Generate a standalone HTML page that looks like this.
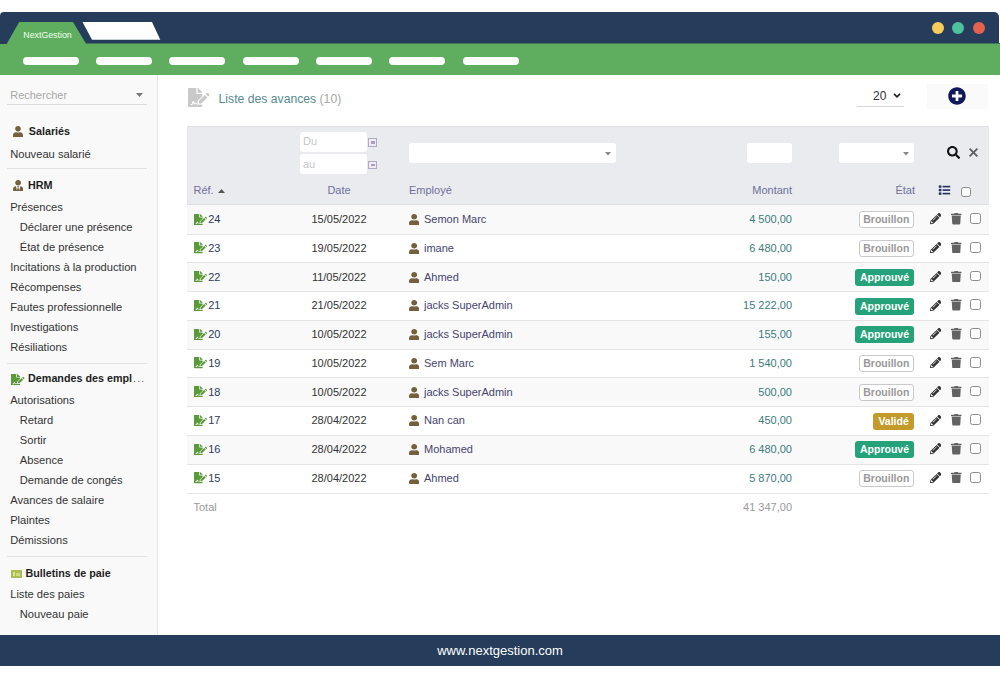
<!DOCTYPE html>
<html><head><meta charset="utf-8">
<style>
*{box-sizing:border-box;margin:0;padding:0}
html,body{width:1000px;height:679px;overflow:hidden;background:#fff;font-family:"Liberation Sans",sans-serif;font-size:11px;color:#333}
.a{position:absolute;display:block}
.t{position:absolute;line-height:14px;white-space:nowrap}
.pill{position:absolute;top:57px;height:8px;width:56px;border-radius:4px;background:#fff}
.dot{position:absolute;top:21.5px;width:12px;height:12px;border-radius:50%}
.sep{position:absolute;left:6.5px;width:140px;height:1px;background:#e2e2e2}
.si{color:#333;font-size:11.15px}
.sh{font-weight:bold;color:#1e1e1e;font-size:10.75px}
.th{color:#70709a}
.row{position:absolute;left:187px;width:802px;border-bottom:1px solid #e6e6e6}
.inp{position:absolute;background:#fff;border-radius:3px}
.badge{position:absolute;height:17px;border-radius:3px;font-weight:bold;font-size:10.5px;line-height:17px;text-align:center}
.br{border:1px solid #c9c9c9;color:#999;background:#fff;line-height:15px}
.ap{background:#26a27a;color:#fff}
.va{background:#c49a2a;color:#fff}
.cb{position:absolute;width:10.5px;height:10.8px;border:1px solid #8c8c8c;border-radius:2.5px;background:#fff}
</style></head><body>

<div class="a" style="left:0;top:12px;width:999px;height:32px;background:#253c5b;border-radius:4px 5px 0 0"></div>
<div class="a" style="left:0;top:44px;width:1000px;height:31px;background:#5fae5f"></div>
<div class="a" style="left:86px;top:43px;width:914px;height:1px;background:#42755d"></div>
<svg class="a" style="left:0;top:0" width="200" height="50"><polygon points="6.5,44.2 19.2,22 73,22 86.4,44.2" fill="#5fae5f"/><polygon points="82.5,22 152,22 160.3,39.8 92,39.8" fill="#fff"/></svg>
<div class="t" style="left:23.3px;top:28.7px;font-size:8.8px;line-height:12px;color:#f2fff0">NextGestion</div>
<div class="pill" style="left:22.8px"></div>
<div class="pill" style="left:96.1px"></div>
<div class="pill" style="left:169.4px"></div>
<div class="pill" style="left:242.7px"></div>
<div class="pill" style="left:316.0px"></div>
<div class="pill" style="left:389.3px"></div>
<div class="pill" style="left:462.6px"></div>
<div class="dot" style="left:932px;background:#f5cd5b"></div>
<div class="dot" style="left:952.3px;background:#4bc39d"></div>
<div class="dot" style="left:973px;background:#e5614f"></div>
<div class="a" style="left:0;top:75px;width:158px;height:560px;background:#f9f9f9;border-right:1px solid #e6e6e6"></div>
<div class="t" style="left:10.2px;top:88px;color:#a8a8a8">Rechercher</div>
<svg class="a" style="left:136px;top:93px" width="7" height="4"><polygon points="0,0 7,0 3.5,4" fill="#777"/></svg>
<div class="sep" style="top:104px;background:#dcdcdc"></div>
<svg class="a" style="left:12.8px;top:125.5px" width="10.00" height="11.30" viewBox="0 0 448 512" preserveAspectRatio="none"><path d="M224 256c70.7 0 128-57.3 128-128S294.7 0 224 0 96 57.3 96 128s57.3 128 128 128zm89.6 32h-16.7c-22.2 10.2-46.9 16-72.9 16s-50.6-5.8-72.9-16h-16.7C60.2 288 0 348.2 0 422.4V464c0 26.5 21.5 48 48 48h352c26.5 0 48-21.5 48-48v-41.6c0-74.2-60.2-134.4-134.4-134.4z" fill="#74603c"/></svg>
<div class="t sh" style="left:28.8px;top:124px;">Salariés</div>
<div class="t si" style="left:10.2px;top:146.8px;">Nouveau salarié</div>
<div class="sep" style="top:168px"></div>
<svg class="a" style="left:12.6px;top:179.6px" width="10.20" height="11.20" viewBox="0 0 448 512" preserveAspectRatio="none"><path d="M224 256c70.7 0 128-57.3 128-128S294.7 0 224 0 96 57.3 96 128s57.3 128 128 128zm95.8 32.6L272 480l-32-136 32-56h-96l32 56-32 136-47.8-191.4C56.9 292 0 350.3 0 422.4V464c0 26.5 21.5 48 48 48h352c26.5 0 48-21.5 48-48v-41.6c0-72.1-56.9-130.4-128.2-133.8z" fill="#74603c"/></svg>
<div class="t sh" style="left:27.9px;top:177.8px;">HRM</div>
<div class="t si" style="left:10.2px;top:200.4px;">Présences</div>
<div class="t si" style="left:19.8px;top:220.4px;">Déclarer une présence</div>
<div class="t si" style="left:19.8px;top:240.4px;">État de présence</div>
<div class="t si" style="left:10.2px;top:260.4px;">Incitations à la production</div>
<div class="t si" style="left:10.2px;top:280.4px;">Récompenses</div>
<div class="t si" style="left:10.2px;top:300.4px;">Fautes professionnelle</div>
<div class="t si" style="left:10.2px;top:320.4px;">Investigations</div>
<div class="t si" style="left:10.2px;top:340.4px;">Résiliations</div>
<div class="sep" style="top:363px"></div>
<svg class="a" style="left:11px;top:373.5px" width="13.50" height="11.50" viewBox="0 0 576 512" preserveAspectRatio="none"><path d="M218.17 424.14c-2.95-5.92-8.09-6.52-10.17-6.52s-7.22.59-10.02 6.19l-7.670 15.34c-6.37 12.78-25.03 11.37-29.48-2.09L144 400l-10.61 31.88c-5.890 17.66-22.38 29.53-41 29.53H80c-8.840 0-16-7.160-16-16s7.160-16 16-16h12.39c4.830 0 9.110-3.080 10.640-7.660l18.19-54.640c3.300-9.810 12.440-16.410 22.780-16.410s19.480 6.590 22.770 16.410l13.880 41.640c19.750-16.190 54.060-9.700 66 14.160 1.890 3.780 5.490 5.950 9.360 6.260v-82.120l128-127.090V160H248c-13.200 0-24-10.800-24-24V0H24C10.700 0 0 10.700 0 24v464c0 13.300 10.700 24 24 24h336c13.300 0 24-10.700 24-24v-40l-128-.110c-16.120-.310-30.580-9.280-37.830-23.750zM384 121.900c0-6.300-2.500-12.400-7-16.900L279.100 7c-4.500-4.500-10.600-7-17-7H256v128h128v-6.100zm-96 225.060V416h68.990l161.680-162.780-67.880-67.880L288 346.960zm280.540-179.630l-31.870-31.870c-9.940-9.940-26.070-9.940-36.010 0l-27.250 27.250 67.880 67.880 27.250-27.250c9.950-9.940 9.950-26.070 0-36.010z" fill="#5b9a3a"/></svg>
<div class="t sh" style="left:28.1px;top:371.4px;">Demandes des empl<span style="font-weight:normal;color:#666;letter-spacing:1.1px;margin-left:1px">...</span></div>
<div class="t si" style="left:10.2px;top:393.2px;">Autorisations</div>
<div class="t si" style="left:19.8px;top:413.2px;">Retard</div>
<div class="t si" style="left:19.8px;top:433.2px;">Sortir</div>
<div class="t si" style="left:19.8px;top:453.2px;">Absence</div>
<div class="t si" style="left:19.8px;top:473.2px;">Demande de congés</div>
<div class="t si" style="left:10.2px;top:493.2px;">Avances de salaire</div>
<div class="t si" style="left:10.2px;top:513.2px;">Plaintes</div>
<div class="t si" style="left:10.2px;top:533.2px;">Démissions</div>
<div class="sep" style="top:556px"></div>
<div class="a" style="left:10.5px;top:570px;width:11.3px;height:7.8px;background:#abbd58"></div>
<div class="a" style="left:13px;top:572px;width:1.5px;height:4px;background:#d9e68a"></div>
<div class="a" style="left:16px;top:573px;width:4px;height:2.5px;background:#cfdc7f"></div>
<div class="t sh" style="left:25.4px;top:565.6px;">Bulletins de paie</div>
<div class="t si" style="left:10.2px;top:587.4px;">Liste des paies</div>
<div class="t si" style="left:19.8px;top:607.4px;">Nouveau paie</div>
<svg class="a" style="left:188px;top:88px" width="21.50" height="19.00" viewBox="0 0 576 512" preserveAspectRatio="none"><path d="M218.17 424.14c-2.95-5.92-8.09-6.52-10.17-6.52s-7.22.59-10.02 6.19l-7.670 15.34c-6.37 12.78-25.03 11.37-29.48-2.09L144 400l-10.61 31.88c-5.890 17.66-22.38 29.53-41 29.53H80c-8.840 0-16-7.160-16-16s7.160-16 16-16h12.39c4.830 0 9.110-3.080 10.640-7.660l18.19-54.640c3.300-9.810 12.440-16.410 22.780-16.410s19.480 6.590 22.770 16.410l13.880 41.640c19.750-16.190 54.060-9.700 66 14.160 1.890 3.780 5.490 5.950 9.360 6.260v-82.120l128-127.090V160H248c-13.200 0-24-10.800-24-24V0H24C10.700 0 0 10.700 0 24v464c0 13.300 10.700 24 24 24h336c13.300 0 24-10.700 24-24v-40l-128-.110c-16.120-.310-30.580-9.280-37.830-23.750zM384 121.900c0-6.300-2.500-12.400-7-16.900L279.100 7c-4.500-4.500-10.600-7-17-7H256v128h128v-6.100zm-96 225.060V416h68.990l161.680-162.780-67.880-67.880L288 346.960zm280.540-179.630l-31.870-31.870c-9.940-9.940-26.070-9.940-36.010 0l-27.250 27.250 67.880 67.880 27.250-27.250c9.950-9.940 9.950-26.070 0-36.010z" fill="#c9c9c9"/></svg>
<div class="t" style="left:218.6px;top:91.6px;font-size:12.2px"><span style="color:#568b90">Liste des avances</span> <span style="color:#a6a6a6">(10)</span></div>
<div class="t" style="left:873px;top:88.5px;font-size:12px;color:#333">20</div>
<svg class="a" style="left:893px;top:92.5px" width="8" height="5"><polyline points="1,0.8 4,3.8 7,0.8" fill="none" stroke="#222" stroke-width="1.7"/></svg>
<div class="a" style="left:857px;top:106px;width:47px;height:1px;background:#d8d8d8"></div>
<div class="a" style="left:927px;top:84.3px;width:60.5px;height:24.3px;background:#fafafa"></div>
<svg class="a" style="left:948.3px;top:86.8px" width="18.00" height="18.00" viewBox="0 0 512 512" preserveAspectRatio="none"><path d="M256 8C119 8 8 119 8 256s111 248 248 248 248-111 248-248S393 8 256 8zm144 276c0 6.6-5.4 12-12 12h-92v92c0 6.6-5.4 12-12 12h-56c-6.6 0-12-5.4-12-12v-92h-92c-6.6 0-12-5.4-12-12v-56c0-6.6 5.4-12 12-12h92v-92c0-6.6 5.4-12 12-12h56c6.6 0 12 5.4 12 12v92h92c6.6 0 12 5.4 12 12v56z" fill="#0f1a5c"/></svg>
<div class="a" style="left:187px;top:126px;width:802px;height:79px;background:#e9ebef;border-top:1.5px solid #dfe1e5;border-left:1px solid #e3e5e9;border-bottom:1px solid #dcdfe3"></div>
<div class="inp" style="left:299.6px;top:131.6px;width:67.4px;height:20.4px"></div>
<div class="inp" style="left:299.6px;top:154px;width:67.4px;height:20.4px"></div>
<div class="t" style="left:303px;top:134px;color:#c8c8c8">Du</div>
<div class="t" style="left:303px;top:157px;color:#c8c8c8">au</div>
<div class="a" style="left:368px;top:138.4px;width:9.4px;height:8.2px;border:1px solid #aeaac4;background:#efeaf4"></div>
<div class="a" style="left:370.5px;top:141.1px;width:4.4px;height:2.8px;background:#ad9cc2"></div>
<div class="a" style="left:368px;top:161px;width:9.4px;height:8.2px;border:1px solid #aeaac4;background:#efeaf4"></div>
<div class="a" style="left:370.5px;top:163.7px;width:4.4px;height:2.8px;background:#ad9cc2"></div>
<div class="inp" style="left:408.6px;top:143px;width:207.4px;height:20px"></div>
<svg class="a" style="left:604.5px;top:152px" width="7" height="4"><polygon points="0,0 6,0 3,3.5" fill="#888"/></svg>
<div class="inp" style="left:746.8px;top:143px;width:44.8px;height:20px"></div>
<div class="inp" style="left:839px;top:143px;width:75.3px;height:20px"></div>
<svg class="a" style="left:902.5px;top:152px" width="7" height="4"><polygon points="0,0 6,0 3,3.5" fill="#888"/></svg>
<svg class="a" style="left:947px;top:146px" width="13.20" height="13.00" viewBox="0 0 512 512" preserveAspectRatio="none"><path d="M505 442.7L405.3 343c-4.5-4.5-10.6-7-17-7H372c27.6-35.3 44-79.7 44-128C416 93.1 322.9 0 208 0S0 93.1 0 208s93.1 208 208 208c48.3 0 92.7-16.4 128-44v16.3c0 6.4 2.5 12.5 7 17l99.7 99.7c9.4 9.4 24.6 9.4 33.9 0l28.3-28.3c9.4-9.4 9.4-24.6.1-34zM208 336c-70.7 0-128-57.2-128-128 0-70.7 57.2-128 128-128 70.7 0 128 57.2 128 128 0 70.7-57.2 128-128 128z" fill="#111"/></svg>
<svg class="a" style="left:967px;top:146px" width="14" height="13"><path d="M2.6 2.6 L10.4 10.4 M10.4 2.6 L2.6 10.4" stroke="#626262" stroke-width="1.9" stroke-linecap="butt"/></svg>
<div class="t th" style="left:193.5px;top:183px;">Réf. <svg style="display:inline-block;vertical-align:1px;margin-left:1px" width="7" height="4"><polygon points="0,4 7,4 3.5,0" fill="#555"/></svg></div>
<div class="t th" style="left:289px;top:183px;width:100px;text-align:center">Date</div>
<div class="t th" style="left:409px;top:183px;">Employé</div>
<div class="t th" style="left:692px;top:183px;width:100px;text-align:right">Montant</div>
<div class="t th" style="left:815px;top:183px;width:100px;text-align:right">État</div>
<svg class="a" style="left:938px;top:184px" width="14" height="12"><g fill="#262d5a"><rect x="0.8" y="1.4" width="2.6" height="2.4"/><rect x="0.8" y="4.9" width="2.6" height="2.4"/><rect x="0.8" y="8.4" width="2.6" height="2.4"/><rect x="4.6" y="1.8" width="7.6" height="1.6"/><rect x="4.6" y="5.3" width="7.6" height="1.6"/><rect x="4.6" y="8.8" width="7.6" height="1.6"/></g></svg>
<div class="cb" style="left:961px;top:186.8px;width:9.8px;height:9.8px"></div>
<div class="a" style="left:187px;top:205px;width:802px;height:29px;background:#f9f9f9"></div>
<div class="a" style="left:187px;top:235px;width:802px;height:27px;background:#fff"></div>
<div class="a" style="left:187px;top:263px;width:802px;height:28px;background:#f9f9f9"></div>
<div class="a" style="left:187px;top:292px;width:802px;height:28px;background:#fff"></div>
<div class="a" style="left:187px;top:321px;width:802px;height:28px;background:#f9f9f9"></div>
<div class="a" style="left:187px;top:350px;width:802px;height:27px;background:#fff"></div>
<div class="a" style="left:187px;top:378px;width:802px;height:28px;background:#f9f9f9"></div>
<div class="a" style="left:187px;top:407px;width:802px;height:28px;background:#fff"></div>
<div class="a" style="left:187px;top:436px;width:802px;height:28px;background:#f9f9f9"></div>
<div class="a" style="left:187px;top:465px;width:802px;height:28px;background:#fff"></div>
<div class="a" style="left:187px;top:234px;width:802px;height:1px;background:#e4e4e4"></div>
<div class="a" style="left:187px;top:262px;width:802px;height:1px;background:#e4e4e4"></div>
<div class="a" style="left:187px;top:291px;width:802px;height:1px;background:#e4e4e4"></div>
<div class="a" style="left:187px;top:320px;width:802px;height:1px;background:#e4e4e4"></div>
<div class="a" style="left:187px;top:349px;width:802px;height:1px;background:#e4e4e4"></div>
<div class="a" style="left:187px;top:377px;width:802px;height:1px;background:#e4e4e4"></div>
<div class="a" style="left:187px;top:406px;width:802px;height:1px;background:#e4e4e4"></div>
<div class="a" style="left:187px;top:435px;width:802px;height:1px;background:#e4e4e4"></div>
<div class="a" style="left:187px;top:464px;width:802px;height:1px;background:#e4e4e4"></div>
<div class="a" style="left:187px;top:493px;width:802px;height:1px;background:#e4e4e4"></div>
<svg class="a" style="left:193.5px;top:213.6px" width="13.00" height="11.20" viewBox="0 0 576 512" preserveAspectRatio="none"><path d="M218.17 424.14c-2.95-5.92-8.09-6.52-10.17-6.52s-7.22.59-10.02 6.19l-7.670 15.34c-6.37 12.78-25.03 11.37-29.48-2.09L144 400l-10.61 31.88c-5.890 17.66-22.38 29.53-41 29.53H80c-8.840 0-16-7.160-16-16s7.160-16 16-16h12.39c4.830 0 9.110-3.080 10.640-7.660l18.19-54.640c3.300-9.810 12.440-16.410 22.780-16.410s19.480 6.590 22.770 16.410l13.880 41.640c19.750-16.190 54.060-9.700 66 14.160 1.890 3.780 5.490 5.950 9.360 6.260v-82.120l128-127.090V160H248c-13.200 0-24-10.800-24-24V0H24C10.700 0 0 10.700 0 24v464c0 13.300 10.700 24 24 24h336c13.300 0 24-10.700 24-24v-40l-128-.110c-16.120-.310-30.580-9.280-37.830-23.750zM384 121.900c0-6.300-2.500-12.400-7-16.900L279.100 7c-4.500-4.500-10.600-7-17-7H256v128h128v-6.100zm-96 225.060V416h68.990l161.680-162.780-67.880-67.880L288 346.960zm280.540-179.630l-31.870-31.870c-9.940-9.940-26.070-9.940-36.010 0l-27.250 27.250 67.880 67.880 27.250-27.250c9.950-9.940 9.950-26.070 0-36.010z" fill="#5b9a3a"/></svg>
<div class="t" style="left:208.2px;top:212.0px;color:#2f3a5c">24</div>
<div class="t" style="left:289px;top:212.0px;width:100px;text-align:center;color:#333">15/05/2022</div>
<svg class="a" style="left:409px;top:214.0px" width="10.40" height="11.00" viewBox="0 0 448 512" preserveAspectRatio="none"><path d="M224 256c70.7 0 128-57.3 128-128S294.7 0 224 0 96 57.3 96 128s57.3 128 128 128zm89.6 32h-16.7c-22.2 10.2-46.9 16-72.9 16s-50.6-5.8-72.9-16h-16.7C60.2 288 0 348.2 0 422.4V464c0 26.5 21.5 48 48 48h352c26.5 0 48-21.5 48-48v-41.6c0-74.2-60.2-134.4-134.4-134.4z" fill="#74603c"/></svg>
<div class="t" style="left:424px;top:212.0px;color:#45456f">Semon Marc</div>
<div class="t" style="left:692px;top:212.0px;width:100px;text-align:right;color:#3c7c7c">4 500,00</div>
<div class="badge br" style="left:858.6px;top:211.40px;width:55.4px">Brouillon</div>
<svg class="a" style="left:929.7px;top:213.4px" width="11.50" height="11.20" viewBox="0 0 512 512" preserveAspectRatio="none"><path d="M497.9 142.1l-46.1 46.1c-4.7 4.7-12.3 4.7-17 0l-111-111c-4.7-4.7-4.7-12.3 0-17l46.1-46.1c18.7-18.7 49.1-18.7 67.9 0l60.1 60.1c18.8 18.7 18.8 49.1 0 67.9zM284.2 99.8L21.6 362.4.4 483.9c-2.9 16.4 11.4 30.6 27.8 27.8l121.5-21.3 262.6-262.6c4.7-4.7 4.7-12.3 0-17l-111-111c-4.8-4.7-12.4-4.7-17.1 0zM124.1 339.9c-5.5-5.5-5.5-14.3 0-19.8l154-154c5.5-5.5 14.3-5.5 19.8 0s5.5 14.3 0 19.8l-154 154c-5.5 5.5-14.3 5.5-19.8 0zM88 424h48v36.3l-64.5 11.3-31.1-31.1L51.7 376H88v48z" fill="#333"/></svg>
<svg class="a" style="left:951px;top:213.2px" width="10.50" height="11.40" viewBox="0 0 448 512" preserveAspectRatio="none"><path d="M432 32H312l-9.4-18.7A24 24 0 0 0 281.1 0H166.8a23.72 23.72 0 0 0-21.4 13.3L136 32H16A16 16 0 0 0 0 48v32a16 16 0 0 0 16 16h416a16 16 0 0 0 16-16V48a16 16 0 0 0-16-16zM53.2 467a48 48 0 0 0 47.9 45h245.8a48 48 0 0 0 47.9-45L416 128H32z" fill="#626262"/></svg>
<div class="cb" style="left:970.3px;top:213.00px"></div>
<svg class="a" style="left:193.5px;top:242.35px" width="13.00" height="11.20" viewBox="0 0 576 512" preserveAspectRatio="none"><path d="M218.17 424.14c-2.95-5.92-8.09-6.52-10.17-6.52s-7.22.59-10.02 6.19l-7.670 15.34c-6.37 12.78-25.03 11.37-29.48-2.09L144 400l-10.61 31.88c-5.890 17.66-22.38 29.53-41 29.53H80c-8.840 0-16-7.160-16-16s7.160-16 16-16h12.39c4.830 0 9.110-3.080 10.640-7.660l18.19-54.640c3.300-9.810 12.440-16.410 22.780-16.410s19.480 6.590 22.770 16.410l13.880 41.640c19.750-16.190 54.060-9.700 66 14.160 1.890 3.780 5.490 5.950 9.360 6.260v-82.120l128-127.090V160H248c-13.200 0-24-10.800-24-24V0H24C10.700 0 0 10.700 0 24v464c0 13.300 10.700 24 24 24h336c13.300 0 24-10.700 24-24v-40l-128-.110c-16.120-.310-30.580-9.280-37.830-23.750zM384 121.900c0-6.300-2.500-12.400-7-16.900L279.100 7c-4.500-4.500-10.600-7-17-7H256v128h128v-6.100zm-96 225.060V416h68.990l161.680-162.780-67.880-67.880L288 346.960zm280.540-179.630l-31.870-31.870c-9.940-9.940-26.070-9.940-36.010 0l-27.250 27.250 67.880 67.880 27.250-27.250c9.950-9.940 9.950-26.070 0-36.010z" fill="#5b9a3a"/></svg>
<div class="t" style="left:208.2px;top:240.75px;color:#2f3a5c">23</div>
<div class="t" style="left:289px;top:240.75px;width:100px;text-align:center;color:#333">19/05/2022</div>
<svg class="a" style="left:409px;top:242.75px" width="10.40" height="11.00" viewBox="0 0 448 512" preserveAspectRatio="none"><path d="M224 256c70.7 0 128-57.3 128-128S294.7 0 224 0 96 57.3 96 128s57.3 128 128 128zm89.6 32h-16.7c-22.2 10.2-46.9 16-72.9 16s-50.6-5.8-72.9-16h-16.7C60.2 288 0 348.2 0 422.4V464c0 26.5 21.5 48 48 48h352c26.5 0 48-21.5 48-48v-41.6c0-74.2-60.2-134.4-134.4-134.4z" fill="#74603c"/></svg>
<div class="t" style="left:424px;top:240.75px;color:#45456f">imane</div>
<div class="t" style="left:692px;top:240.75px;width:100px;text-align:right;color:#3c7c7c">6 480,00</div>
<div class="badge br" style="left:858.6px;top:240.15px;width:55.4px">Brouillon</div>
<svg class="a" style="left:929.7px;top:242.15px" width="11.50" height="11.20" viewBox="0 0 512 512" preserveAspectRatio="none"><path d="M497.9 142.1l-46.1 46.1c-4.7 4.7-12.3 4.7-17 0l-111-111c-4.7-4.7-4.7-12.3 0-17l46.1-46.1c18.7-18.7 49.1-18.7 67.9 0l60.1 60.1c18.8 18.7 18.8 49.1 0 67.9zM284.2 99.8L21.6 362.4.4 483.9c-2.9 16.4 11.4 30.6 27.8 27.8l121.5-21.3 262.6-262.6c4.7-4.7 4.7-12.3 0-17l-111-111c-4.8-4.7-12.4-4.7-17.1 0zM124.1 339.9c-5.5-5.5-5.5-14.3 0-19.8l154-154c5.5-5.5 14.3-5.5 19.8 0s5.5 14.3 0 19.8l-154 154c-5.5 5.5-14.3 5.5-19.8 0zM88 424h48v36.3l-64.5 11.3-31.1-31.1L51.7 376H88v48z" fill="#333"/></svg>
<svg class="a" style="left:951px;top:241.95px" width="10.50" height="11.40" viewBox="0 0 448 512" preserveAspectRatio="none"><path d="M432 32H312l-9.4-18.7A24 24 0 0 0 281.1 0H166.8a23.72 23.72 0 0 0-21.4 13.3L136 32H16A16 16 0 0 0 0 48v32a16 16 0 0 0 16 16h416a16 16 0 0 0 16-16V48a16 16 0 0 0-16-16zM53.2 467a48 48 0 0 0 47.9 45h245.8a48 48 0 0 0 47.9-45L416 128H32z" fill="#626262"/></svg>
<div class="cb" style="left:970.3px;top:241.75px"></div>
<svg class="a" style="left:193.5px;top:271.1px" width="13.00" height="11.20" viewBox="0 0 576 512" preserveAspectRatio="none"><path d="M218.17 424.14c-2.95-5.92-8.09-6.52-10.17-6.52s-7.22.59-10.02 6.19l-7.670 15.34c-6.37 12.78-25.03 11.37-29.48-2.09L144 400l-10.61 31.88c-5.890 17.66-22.38 29.53-41 29.53H80c-8.840 0-16-7.160-16-16s7.160-16 16-16h12.39c4.830 0 9.110-3.080 10.640-7.660l18.19-54.640c3.300-9.810 12.440-16.410 22.780-16.410s19.480 6.590 22.770 16.410l13.880 41.640c19.750-16.190 54.060-9.700 66 14.160 1.890 3.780 5.490 5.950 9.360 6.260v-82.120l128-127.090V160H248c-13.200 0-24-10.800-24-24V0H24C10.700 0 0 10.700 0 24v464c0 13.300 10.700 24 24 24h336c13.300 0 24-10.700 24-24v-40l-128-.110c-16.120-.310-30.580-9.280-37.830-23.750zM384 121.900c0-6.300-2.500-12.400-7-16.900L279.100 7c-4.500-4.500-10.600-7-17-7H256v128h128v-6.100zm-96 225.060V416h68.990l161.680-162.780-67.880-67.880L288 346.960zm280.540-179.630l-31.870-31.870c-9.940-9.940-26.070-9.940-36.010 0l-27.250 27.250 67.880 67.880 27.250-27.250c9.950-9.940 9.950-26.070 0-36.010z" fill="#5b9a3a"/></svg>
<div class="t" style="left:208.2px;top:269.5px;color:#2f3a5c">22</div>
<div class="t" style="left:289px;top:269.5px;width:100px;text-align:center;color:#333">11/05/2022</div>
<svg class="a" style="left:409px;top:271.5px" width="10.40" height="11.00" viewBox="0 0 448 512" preserveAspectRatio="none"><path d="M224 256c70.7 0 128-57.3 128-128S294.7 0 224 0 96 57.3 96 128s57.3 128 128 128zm89.6 32h-16.7c-22.2 10.2-46.9 16-72.9 16s-50.6-5.8-72.9-16h-16.7C60.2 288 0 348.2 0 422.4V464c0 26.5 21.5 48 48 48h352c26.5 0 48-21.5 48-48v-41.6c0-74.2-60.2-134.4-134.4-134.4z" fill="#74603c"/></svg>
<div class="t" style="left:424px;top:269.5px;color:#45456f">Ahmed</div>
<div class="t" style="left:692px;top:269.5px;width:100px;text-align:right;color:#3c7c7c">150,00</div>
<div class="badge ap" style="left:855.0px;top:268.90px;width:59px">Approuvé</div>
<svg class="a" style="left:929.7px;top:270.9px" width="11.50" height="11.20" viewBox="0 0 512 512" preserveAspectRatio="none"><path d="M497.9 142.1l-46.1 46.1c-4.7 4.7-12.3 4.7-17 0l-111-111c-4.7-4.7-4.7-12.3 0-17l46.1-46.1c18.7-18.7 49.1-18.7 67.9 0l60.1 60.1c18.8 18.7 18.8 49.1 0 67.9zM284.2 99.8L21.6 362.4.4 483.9c-2.9 16.4 11.4 30.6 27.8 27.8l121.5-21.3 262.6-262.6c4.7-4.7 4.7-12.3 0-17l-111-111c-4.8-4.7-12.4-4.7-17.1 0zM124.1 339.9c-5.5-5.5-5.5-14.3 0-19.8l154-154c5.5-5.5 14.3-5.5 19.8 0s5.5 14.3 0 19.8l-154 154c-5.5 5.5-14.3 5.5-19.8 0zM88 424h48v36.3l-64.5 11.3-31.1-31.1L51.7 376H88v48z" fill="#333"/></svg>
<svg class="a" style="left:951px;top:270.7px" width="10.50" height="11.40" viewBox="0 0 448 512" preserveAspectRatio="none"><path d="M432 32H312l-9.4-18.7A24 24 0 0 0 281.1 0H166.8a23.72 23.72 0 0 0-21.4 13.3L136 32H16A16 16 0 0 0 0 48v32a16 16 0 0 0 16 16h416a16 16 0 0 0 16-16V48a16 16 0 0 0-16-16zM53.2 467a48 48 0 0 0 47.9 45h245.8a48 48 0 0 0 47.9-45L416 128H32z" fill="#626262"/></svg>
<div class="cb" style="left:970.3px;top:270.50px"></div>
<svg class="a" style="left:193.5px;top:299.85px" width="13.00" height="11.20" viewBox="0 0 576 512" preserveAspectRatio="none"><path d="M218.17 424.14c-2.95-5.92-8.09-6.52-10.17-6.52s-7.22.59-10.02 6.19l-7.670 15.34c-6.37 12.78-25.03 11.37-29.48-2.09L144 400l-10.61 31.88c-5.890 17.66-22.38 29.53-41 29.53H80c-8.840 0-16-7.160-16-16s7.160-16 16-16h12.39c4.830 0 9.110-3.080 10.640-7.660l18.19-54.640c3.300-9.810 12.440-16.410 22.780-16.410s19.480 6.590 22.770 16.410l13.880 41.640c19.750-16.190 54.060-9.700 66 14.160 1.890 3.780 5.490 5.950 9.360 6.260v-82.120l128-127.090V160H248c-13.200 0-24-10.800-24-24V0H24C10.700 0 0 10.700 0 24v464c0 13.300 10.700 24 24 24h336c13.300 0 24-10.700 24-24v-40l-128-.110c-16.120-.310-30.580-9.280-37.830-23.750zM384 121.900c0-6.300-2.500-12.400-7-16.900L279.100 7c-4.500-4.500-10.600-7-17-7H256v128h128v-6.100zm-96 225.060V416h68.990l161.680-162.780-67.880-67.880L288 346.960zm280.540-179.630l-31.870-31.870c-9.940-9.940-26.070-9.940-36.010 0l-27.250 27.250 67.880 67.880 27.250-27.250c9.950-9.940 9.950-26.070 0-36.010z" fill="#5b9a3a"/></svg>
<div class="t" style="left:208.2px;top:298.25px;color:#2f3a5c">21</div>
<div class="t" style="left:289px;top:298.25px;width:100px;text-align:center;color:#333">21/05/2022</div>
<svg class="a" style="left:409px;top:300.25px" width="10.40" height="11.00" viewBox="0 0 448 512" preserveAspectRatio="none"><path d="M224 256c70.7 0 128-57.3 128-128S294.7 0 224 0 96 57.3 96 128s57.3 128 128 128zm89.6 32h-16.7c-22.2 10.2-46.9 16-72.9 16s-50.6-5.8-72.9-16h-16.7C60.2 288 0 348.2 0 422.4V464c0 26.5 21.5 48 48 48h352c26.5 0 48-21.5 48-48v-41.6c0-74.2-60.2-134.4-134.4-134.4z" fill="#74603c"/></svg>
<div class="t" style="left:424px;top:298.25px;color:#45456f">jacks SuperAdmin</div>
<div class="t" style="left:692px;top:298.25px;width:100px;text-align:right;color:#3c7c7c">15 222,00</div>
<div class="badge ap" style="left:855.0px;top:297.65px;width:59px">Approuvé</div>
<svg class="a" style="left:929.7px;top:299.65px" width="11.50" height="11.20" viewBox="0 0 512 512" preserveAspectRatio="none"><path d="M497.9 142.1l-46.1 46.1c-4.7 4.7-12.3 4.7-17 0l-111-111c-4.7-4.7-4.7-12.3 0-17l46.1-46.1c18.7-18.7 49.1-18.7 67.9 0l60.1 60.1c18.8 18.7 18.8 49.1 0 67.9zM284.2 99.8L21.6 362.4.4 483.9c-2.9 16.4 11.4 30.6 27.8 27.8l121.5-21.3 262.6-262.6c4.7-4.7 4.7-12.3 0-17l-111-111c-4.8-4.7-12.4-4.7-17.1 0zM124.1 339.9c-5.5-5.5-5.5-14.3 0-19.8l154-154c5.5-5.5 14.3-5.5 19.8 0s5.5 14.3 0 19.8l-154 154c-5.5 5.5-14.3 5.5-19.8 0zM88 424h48v36.3l-64.5 11.3-31.1-31.1L51.7 376H88v48z" fill="#333"/></svg>
<svg class="a" style="left:951px;top:299.45px" width="10.50" height="11.40" viewBox="0 0 448 512" preserveAspectRatio="none"><path d="M432 32H312l-9.4-18.7A24 24 0 0 0 281.1 0H166.8a23.72 23.72 0 0 0-21.4 13.3L136 32H16A16 16 0 0 0 0 48v32a16 16 0 0 0 16 16h416a16 16 0 0 0 16-16V48a16 16 0 0 0-16-16zM53.2 467a48 48 0 0 0 47.9 45h245.8a48 48 0 0 0 47.9-45L416 128H32z" fill="#626262"/></svg>
<div class="cb" style="left:970.3px;top:299.25px"></div>
<svg class="a" style="left:193.5px;top:328.6px" width="13.00" height="11.20" viewBox="0 0 576 512" preserveAspectRatio="none"><path d="M218.17 424.14c-2.95-5.92-8.09-6.52-10.17-6.52s-7.22.59-10.02 6.19l-7.670 15.34c-6.37 12.78-25.03 11.37-29.48-2.09L144 400l-10.61 31.88c-5.890 17.66-22.38 29.53-41 29.53H80c-8.840 0-16-7.160-16-16s7.160-16 16-16h12.39c4.830 0 9.110-3.080 10.640-7.660l18.19-54.640c3.300-9.810 12.440-16.410 22.780-16.410s19.480 6.590 22.770 16.410l13.880 41.640c19.750-16.190 54.060-9.700 66 14.160 1.890 3.780 5.490 5.950 9.360 6.260v-82.120l128-127.090V160H248c-13.200 0-24-10.800-24-24V0H24C10.700 0 0 10.700 0 24v464c0 13.300 10.700 24 24 24h336c13.300 0 24-10.700 24-24v-40l-128-.110c-16.120-.310-30.580-9.280-37.830-23.750zM384 121.900c0-6.300-2.500-12.400-7-16.900L279.100 7c-4.500-4.500-10.600-7-17-7H256v128h128v-6.100zm-96 225.060V416h68.990l161.680-162.780-67.880-67.880L288 346.960zm280.540-179.630l-31.870-31.870c-9.940-9.940-26.070-9.940-36.010 0l-27.250 27.250 67.880 67.880 27.250-27.250c9.950-9.940 9.950-26.070 0-36.010z" fill="#5b9a3a"/></svg>
<div class="t" style="left:208.2px;top:327.0px;color:#2f3a5c">20</div>
<div class="t" style="left:289px;top:327.0px;width:100px;text-align:center;color:#333">10/05/2022</div>
<svg class="a" style="left:409px;top:329.0px" width="10.40" height="11.00" viewBox="0 0 448 512" preserveAspectRatio="none"><path d="M224 256c70.7 0 128-57.3 128-128S294.7 0 224 0 96 57.3 96 128s57.3 128 128 128zm89.6 32h-16.7c-22.2 10.2-46.9 16-72.9 16s-50.6-5.8-72.9-16h-16.7C60.2 288 0 348.2 0 422.4V464c0 26.5 21.5 48 48 48h352c26.5 0 48-21.5 48-48v-41.6c0-74.2-60.2-134.4-134.4-134.4z" fill="#74603c"/></svg>
<div class="t" style="left:424px;top:327.0px;color:#45456f">jacks SuperAdmin</div>
<div class="t" style="left:692px;top:327.0px;width:100px;text-align:right;color:#3c7c7c">155,00</div>
<div class="badge ap" style="left:855.0px;top:326.40px;width:59px">Approuvé</div>
<svg class="a" style="left:929.7px;top:328.4px" width="11.50" height="11.20" viewBox="0 0 512 512" preserveAspectRatio="none"><path d="M497.9 142.1l-46.1 46.1c-4.7 4.7-12.3 4.7-17 0l-111-111c-4.7-4.7-4.7-12.3 0-17l46.1-46.1c18.7-18.7 49.1-18.7 67.9 0l60.1 60.1c18.8 18.7 18.8 49.1 0 67.9zM284.2 99.8L21.6 362.4.4 483.9c-2.9 16.4 11.4 30.6 27.8 27.8l121.5-21.3 262.6-262.6c4.7-4.7 4.7-12.3 0-17l-111-111c-4.8-4.7-12.4-4.7-17.1 0zM124.1 339.9c-5.5-5.5-5.5-14.3 0-19.8l154-154c5.5-5.5 14.3-5.5 19.8 0s5.5 14.3 0 19.8l-154 154c-5.5 5.5-14.3 5.5-19.8 0zM88 424h48v36.3l-64.5 11.3-31.1-31.1L51.7 376H88v48z" fill="#333"/></svg>
<svg class="a" style="left:951px;top:328.2px" width="10.50" height="11.40" viewBox="0 0 448 512" preserveAspectRatio="none"><path d="M432 32H312l-9.4-18.7A24 24 0 0 0 281.1 0H166.8a23.72 23.72 0 0 0-21.4 13.3L136 32H16A16 16 0 0 0 0 48v32a16 16 0 0 0 16 16h416a16 16 0 0 0 16-16V48a16 16 0 0 0-16-16zM53.2 467a48 48 0 0 0 47.9 45h245.8a48 48 0 0 0 47.9-45L416 128H32z" fill="#626262"/></svg>
<div class="cb" style="left:970.3px;top:328.00px"></div>
<svg class="a" style="left:193.5px;top:357.35px" width="13.00" height="11.20" viewBox="0 0 576 512" preserveAspectRatio="none"><path d="M218.17 424.14c-2.95-5.92-8.09-6.52-10.17-6.52s-7.22.59-10.02 6.19l-7.670 15.34c-6.37 12.78-25.03 11.37-29.48-2.09L144 400l-10.61 31.88c-5.890 17.66-22.38 29.53-41 29.53H80c-8.840 0-16-7.160-16-16s7.160-16 16-16h12.39c4.830 0 9.110-3.080 10.640-7.660l18.19-54.640c3.300-9.810 12.440-16.410 22.780-16.410s19.480 6.590 22.770 16.410l13.880 41.640c19.750-16.190 54.060-9.700 66 14.160 1.890 3.780 5.490 5.950 9.360 6.260v-82.120l128-127.090V160H248c-13.200 0-24-10.800-24-24V0H24C10.700 0 0 10.700 0 24v464c0 13.300 10.700 24 24 24h336c13.300 0 24-10.700 24-24v-40l-128-.110c-16.120-.310-30.580-9.280-37.830-23.750zM384 121.900c0-6.300-2.500-12.400-7-16.900L279.100 7c-4.500-4.500-10.600-7-17-7H256v128h128v-6.100zm-96 225.060V416h68.990l161.680-162.780-67.880-67.880L288 346.960zm280.540-179.630l-31.870-31.870c-9.940-9.940-26.070-9.940-36.010 0l-27.250 27.250 67.880 67.880 27.250-27.250c9.950-9.940 9.950-26.070 0-36.010z" fill="#5b9a3a"/></svg>
<div class="t" style="left:208.2px;top:355.75px;color:#2f3a5c">19</div>
<div class="t" style="left:289px;top:355.75px;width:100px;text-align:center;color:#333">10/05/2022</div>
<svg class="a" style="left:409px;top:357.75px" width="10.40" height="11.00" viewBox="0 0 448 512" preserveAspectRatio="none"><path d="M224 256c70.7 0 128-57.3 128-128S294.7 0 224 0 96 57.3 96 128s57.3 128 128 128zm89.6 32h-16.7c-22.2 10.2-46.9 16-72.9 16s-50.6-5.8-72.9-16h-16.7C60.2 288 0 348.2 0 422.4V464c0 26.5 21.5 48 48 48h352c26.5 0 48-21.5 48-48v-41.6c0-74.2-60.2-134.4-134.4-134.4z" fill="#74603c"/></svg>
<div class="t" style="left:424px;top:355.75px;color:#45456f">Sem Marc</div>
<div class="t" style="left:692px;top:355.75px;width:100px;text-align:right;color:#3c7c7c">1 540,00</div>
<div class="badge br" style="left:858.6px;top:355.15px;width:55.4px">Brouillon</div>
<svg class="a" style="left:929.7px;top:357.15px" width="11.50" height="11.20" viewBox="0 0 512 512" preserveAspectRatio="none"><path d="M497.9 142.1l-46.1 46.1c-4.7 4.7-12.3 4.7-17 0l-111-111c-4.7-4.7-4.7-12.3 0-17l46.1-46.1c18.7-18.7 49.1-18.7 67.9 0l60.1 60.1c18.8 18.7 18.8 49.1 0 67.9zM284.2 99.8L21.6 362.4.4 483.9c-2.9 16.4 11.4 30.6 27.8 27.8l121.5-21.3 262.6-262.6c4.7-4.7 4.7-12.3 0-17l-111-111c-4.8-4.7-12.4-4.7-17.1 0zM124.1 339.9c-5.5-5.5-5.5-14.3 0-19.8l154-154c5.5-5.5 14.3-5.5 19.8 0s5.5 14.3 0 19.8l-154 154c-5.5 5.5-14.3 5.5-19.8 0zM88 424h48v36.3l-64.5 11.3-31.1-31.1L51.7 376H88v48z" fill="#333"/></svg>
<svg class="a" style="left:951px;top:356.95px" width="10.50" height="11.40" viewBox="0 0 448 512" preserveAspectRatio="none"><path d="M432 32H312l-9.4-18.7A24 24 0 0 0 281.1 0H166.8a23.72 23.72 0 0 0-21.4 13.3L136 32H16A16 16 0 0 0 0 48v32a16 16 0 0 0 16 16h416a16 16 0 0 0 16-16V48a16 16 0 0 0-16-16zM53.2 467a48 48 0 0 0 47.9 45h245.8a48 48 0 0 0 47.9-45L416 128H32z" fill="#626262"/></svg>
<div class="cb" style="left:970.3px;top:356.75px"></div>
<svg class="a" style="left:193.5px;top:386.1px" width="13.00" height="11.20" viewBox="0 0 576 512" preserveAspectRatio="none"><path d="M218.17 424.14c-2.95-5.92-8.09-6.52-10.17-6.52s-7.22.59-10.02 6.19l-7.670 15.34c-6.37 12.78-25.03 11.37-29.48-2.09L144 400l-10.61 31.88c-5.890 17.66-22.38 29.53-41 29.53H80c-8.840 0-16-7.160-16-16s7.160-16 16-16h12.39c4.830 0 9.110-3.080 10.640-7.660l18.19-54.640c3.300-9.810 12.440-16.410 22.780-16.410s19.480 6.590 22.770 16.410l13.880 41.640c19.750-16.190 54.060-9.700 66 14.160 1.890 3.780 5.490 5.950 9.360 6.260v-82.120l128-127.090V160H248c-13.200 0-24-10.800-24-24V0H24C10.700 0 0 10.700 0 24v464c0 13.300 10.700 24 24 24h336c13.300 0 24-10.700 24-24v-40l-128-.110c-16.120-.310-30.580-9.280-37.830-23.750zM384 121.900c0-6.300-2.500-12.400-7-16.900L279.100 7c-4.500-4.500-10.600-7-17-7H256v128h128v-6.100zm-96 225.060V416h68.990l161.680-162.780-67.880-67.880L288 346.960zm280.540-179.630l-31.870-31.870c-9.940-9.940-26.070-9.940-36.010 0l-27.250 27.250 67.880 67.880 27.250-27.250c9.950-9.940 9.950-26.070 0-36.010z" fill="#5b9a3a"/></svg>
<div class="t" style="left:208.2px;top:384.5px;color:#2f3a5c">18</div>
<div class="t" style="left:289px;top:384.5px;width:100px;text-align:center;color:#333">10/05/2022</div>
<svg class="a" style="left:409px;top:386.5px" width="10.40" height="11.00" viewBox="0 0 448 512" preserveAspectRatio="none"><path d="M224 256c70.7 0 128-57.3 128-128S294.7 0 224 0 96 57.3 96 128s57.3 128 128 128zm89.6 32h-16.7c-22.2 10.2-46.9 16-72.9 16s-50.6-5.8-72.9-16h-16.7C60.2 288 0 348.2 0 422.4V464c0 26.5 21.5 48 48 48h352c26.5 0 48-21.5 48-48v-41.6c0-74.2-60.2-134.4-134.4-134.4z" fill="#74603c"/></svg>
<div class="t" style="left:424px;top:384.5px;color:#45456f">jacks SuperAdmin</div>
<div class="t" style="left:692px;top:384.5px;width:100px;text-align:right;color:#3c7c7c">500,00</div>
<div class="badge br" style="left:858.6px;top:383.90px;width:55.4px">Brouillon</div>
<svg class="a" style="left:929.7px;top:385.9px" width="11.50" height="11.20" viewBox="0 0 512 512" preserveAspectRatio="none"><path d="M497.9 142.1l-46.1 46.1c-4.7 4.7-12.3 4.7-17 0l-111-111c-4.7-4.7-4.7-12.3 0-17l46.1-46.1c18.7-18.7 49.1-18.7 67.9 0l60.1 60.1c18.8 18.7 18.8 49.1 0 67.9zM284.2 99.8L21.6 362.4.4 483.9c-2.9 16.4 11.4 30.6 27.8 27.8l121.5-21.3 262.6-262.6c4.7-4.7 4.7-12.3 0-17l-111-111c-4.8-4.7-12.4-4.7-17.1 0zM124.1 339.9c-5.5-5.5-5.5-14.3 0-19.8l154-154c5.5-5.5 14.3-5.5 19.8 0s5.5 14.3 0 19.8l-154 154c-5.5 5.5-14.3 5.5-19.8 0zM88 424h48v36.3l-64.5 11.3-31.1-31.1L51.7 376H88v48z" fill="#333"/></svg>
<svg class="a" style="left:951px;top:385.7px" width="10.50" height="11.40" viewBox="0 0 448 512" preserveAspectRatio="none"><path d="M432 32H312l-9.4-18.7A24 24 0 0 0 281.1 0H166.8a23.72 23.72 0 0 0-21.4 13.3L136 32H16A16 16 0 0 0 0 48v32a16 16 0 0 0 16 16h416a16 16 0 0 0 16-16V48a16 16 0 0 0-16-16zM53.2 467a48 48 0 0 0 47.9 45h245.8a48 48 0 0 0 47.9-45L416 128H32z" fill="#626262"/></svg>
<div class="cb" style="left:970.3px;top:385.50px"></div>
<svg class="a" style="left:193.5px;top:414.85px" width="13.00" height="11.20" viewBox="0 0 576 512" preserveAspectRatio="none"><path d="M218.17 424.14c-2.95-5.92-8.09-6.52-10.17-6.52s-7.22.59-10.02 6.19l-7.670 15.34c-6.37 12.78-25.03 11.37-29.48-2.09L144 400l-10.61 31.88c-5.890 17.66-22.38 29.53-41 29.53H80c-8.840 0-16-7.160-16-16s7.160-16 16-16h12.39c4.830 0 9.110-3.080 10.640-7.660l18.19-54.640c3.300-9.810 12.440-16.410 22.780-16.410s19.480 6.590 22.770 16.410l13.880 41.640c19.750-16.190 54.060-9.700 66 14.160 1.890 3.780 5.490 5.950 9.360 6.260v-82.120l128-127.090V160H248c-13.200 0-24-10.800-24-24V0H24C10.700 0 0 10.700 0 24v464c0 13.300 10.700 24 24 24h336c13.300 0 24-10.700 24-24v-40l-128-.110c-16.120-.310-30.580-9.280-37.830-23.750zM384 121.900c0-6.300-2.500-12.400-7-16.900L279.100 7c-4.500-4.500-10.600-7-17-7H256v128h128v-6.100zm-96 225.060V416h68.990l161.680-162.780-67.880-67.880L288 346.960zm280.540-179.630l-31.870-31.870c-9.940-9.940-26.070-9.940-36.010 0l-27.250 27.250 67.880 67.880 27.250-27.250c9.950-9.940 9.950-26.070 0-36.010z" fill="#5b9a3a"/></svg>
<div class="t" style="left:208.2px;top:413.25px;color:#2f3a5c">17</div>
<div class="t" style="left:289px;top:413.25px;width:100px;text-align:center;color:#333">28/04/2022</div>
<svg class="a" style="left:409px;top:415.25px" width="10.40" height="11.00" viewBox="0 0 448 512" preserveAspectRatio="none"><path d="M224 256c70.7 0 128-57.3 128-128S294.7 0 224 0 96 57.3 96 128s57.3 128 128 128zm89.6 32h-16.7c-22.2 10.2-46.9 16-72.9 16s-50.6-5.8-72.9-16h-16.7C60.2 288 0 348.2 0 422.4V464c0 26.5 21.5 48 48 48h352c26.5 0 48-21.5 48-48v-41.6c0-74.2-60.2-134.4-134.4-134.4z" fill="#74603c"/></svg>
<div class="t" style="left:424px;top:413.25px;color:#45456f">Nan can</div>
<div class="t" style="left:692px;top:413.25px;width:100px;text-align:right;color:#3c7c7c">450,00</div>
<div class="badge va" style="left:873.2px;top:412.65px;width:40.8px">Validé</div>
<svg class="a" style="left:929.7px;top:414.65px" width="11.50" height="11.20" viewBox="0 0 512 512" preserveAspectRatio="none"><path d="M497.9 142.1l-46.1 46.1c-4.7 4.7-12.3 4.7-17 0l-111-111c-4.7-4.7-4.7-12.3 0-17l46.1-46.1c18.7-18.7 49.1-18.7 67.9 0l60.1 60.1c18.8 18.7 18.8 49.1 0 67.9zM284.2 99.8L21.6 362.4.4 483.9c-2.9 16.4 11.4 30.6 27.8 27.8l121.5-21.3 262.6-262.6c4.7-4.7 4.7-12.3 0-17l-111-111c-4.8-4.7-12.4-4.7-17.1 0zM124.1 339.9c-5.5-5.5-5.5-14.3 0-19.8l154-154c5.5-5.5 14.3-5.5 19.8 0s5.5 14.3 0 19.8l-154 154c-5.5 5.5-14.3 5.5-19.8 0zM88 424h48v36.3l-64.5 11.3-31.1-31.1L51.7 376H88v48z" fill="#333"/></svg>
<svg class="a" style="left:951px;top:414.45px" width="10.50" height="11.40" viewBox="0 0 448 512" preserveAspectRatio="none"><path d="M432 32H312l-9.4-18.7A24 24 0 0 0 281.1 0H166.8a23.72 23.72 0 0 0-21.4 13.3L136 32H16A16 16 0 0 0 0 48v32a16 16 0 0 0 16 16h416a16 16 0 0 0 16-16V48a16 16 0 0 0-16-16zM53.2 467a48 48 0 0 0 47.9 45h245.8a48 48 0 0 0 47.9-45L416 128H32z" fill="#626262"/></svg>
<div class="cb" style="left:970.3px;top:414.25px"></div>
<svg class="a" style="left:193.5px;top:443.6px" width="13.00" height="11.20" viewBox="0 0 576 512" preserveAspectRatio="none"><path d="M218.17 424.14c-2.95-5.92-8.09-6.52-10.17-6.52s-7.22.59-10.02 6.19l-7.670 15.34c-6.37 12.78-25.03 11.37-29.48-2.09L144 400l-10.61 31.88c-5.890 17.66-22.38 29.53-41 29.53H80c-8.840 0-16-7.160-16-16s7.160-16 16-16h12.39c4.830 0 9.110-3.080 10.640-7.660l18.19-54.640c3.300-9.810 12.440-16.410 22.780-16.410s19.480 6.590 22.770 16.410l13.880 41.640c19.750-16.190 54.060-9.700 66 14.160 1.890 3.780 5.490 5.950 9.360 6.260v-82.120l128-127.090V160H248c-13.200 0-24-10.800-24-24V0H24C10.700 0 0 10.700 0 24v464c0 13.300 10.700 24 24 24h336c13.300 0 24-10.700 24-24v-40l-128-.110c-16.120-.310-30.580-9.280-37.830-23.750zM384 121.900c0-6.300-2.500-12.400-7-16.900L279.100 7c-4.500-4.500-10.600-7-17-7H256v128h128v-6.100zm-96 225.060V416h68.990l161.680-162.780-67.880-67.880L288 346.960zm280.540-179.630l-31.870-31.870c-9.940-9.940-26.070-9.940-36.010 0l-27.250 27.250 67.880 67.880 27.250-27.250c9.950-9.940 9.950-26.070 0-36.010z" fill="#5b9a3a"/></svg>
<div class="t" style="left:208.2px;top:442.0px;color:#2f3a5c">16</div>
<div class="t" style="left:289px;top:442.0px;width:100px;text-align:center;color:#333">28/04/2022</div>
<svg class="a" style="left:409px;top:444.0px" width="10.40" height="11.00" viewBox="0 0 448 512" preserveAspectRatio="none"><path d="M224 256c70.7 0 128-57.3 128-128S294.7 0 224 0 96 57.3 96 128s57.3 128 128 128zm89.6 32h-16.7c-22.2 10.2-46.9 16-72.9 16s-50.6-5.8-72.9-16h-16.7C60.2 288 0 348.2 0 422.4V464c0 26.5 21.5 48 48 48h352c26.5 0 48-21.5 48-48v-41.6c0-74.2-60.2-134.4-134.4-134.4z" fill="#74603c"/></svg>
<div class="t" style="left:424px;top:442.0px;color:#45456f">Mohamed</div>
<div class="t" style="left:692px;top:442.0px;width:100px;text-align:right;color:#3c7c7c">6 480,00</div>
<div class="badge ap" style="left:855.0px;top:441.40px;width:59px">Approuvé</div>
<svg class="a" style="left:929.7px;top:443.4px" width="11.50" height="11.20" viewBox="0 0 512 512" preserveAspectRatio="none"><path d="M497.9 142.1l-46.1 46.1c-4.7 4.7-12.3 4.7-17 0l-111-111c-4.7-4.7-4.7-12.3 0-17l46.1-46.1c18.7-18.7 49.1-18.7 67.9 0l60.1 60.1c18.8 18.7 18.8 49.1 0 67.9zM284.2 99.8L21.6 362.4.4 483.9c-2.9 16.4 11.4 30.6 27.8 27.8l121.5-21.3 262.6-262.6c4.7-4.7 4.7-12.3 0-17l-111-111c-4.8-4.7-12.4-4.7-17.1 0zM124.1 339.9c-5.5-5.5-5.5-14.3 0-19.8l154-154c5.5-5.5 14.3-5.5 19.8 0s5.5 14.3 0 19.8l-154 154c-5.5 5.5-14.3 5.5-19.8 0zM88 424h48v36.3l-64.5 11.3-31.1-31.1L51.7 376H88v48z" fill="#333"/></svg>
<svg class="a" style="left:951px;top:443.2px" width="10.50" height="11.40" viewBox="0 0 448 512" preserveAspectRatio="none"><path d="M432 32H312l-9.4-18.7A24 24 0 0 0 281.1 0H166.8a23.72 23.72 0 0 0-21.4 13.3L136 32H16A16 16 0 0 0 0 48v32a16 16 0 0 0 16 16h416a16 16 0 0 0 16-16V48a16 16 0 0 0-16-16zM53.2 467a48 48 0 0 0 47.9 45h245.8a48 48 0 0 0 47.9-45L416 128H32z" fill="#626262"/></svg>
<div class="cb" style="left:970.3px;top:443.00px"></div>
<svg class="a" style="left:193.5px;top:472.35px" width="13.00" height="11.20" viewBox="0 0 576 512" preserveAspectRatio="none"><path d="M218.17 424.14c-2.95-5.92-8.09-6.52-10.17-6.52s-7.22.59-10.02 6.19l-7.670 15.34c-6.37 12.78-25.03 11.37-29.48-2.09L144 400l-10.61 31.88c-5.890 17.66-22.38 29.53-41 29.53H80c-8.840 0-16-7.160-16-16s7.160-16 16-16h12.39c4.830 0 9.110-3.080 10.640-7.660l18.19-54.640c3.300-9.810 12.440-16.410 22.780-16.410s19.480 6.590 22.770 16.410l13.880 41.640c19.750-16.190 54.060-9.700 66 14.160 1.890 3.780 5.490 5.950 9.360 6.260v-82.120l128-127.090V160H248c-13.200 0-24-10.800-24-24V0H24C10.700 0 0 10.700 0 24v464c0 13.300 10.700 24 24 24h336c13.300 0 24-10.700 24-24v-40l-128-.110c-16.120-.310-30.580-9.280-37.830-23.750zM384 121.900c0-6.300-2.500-12.400-7-16.900L279.100 7c-4.500-4.500-10.600-7-17-7H256v128h128v-6.100zm-96 225.060V416h68.990l161.680-162.780-67.880-67.880L288 346.960zm280.540-179.630l-31.870-31.870c-9.940-9.940-26.070-9.940-36.010 0l-27.250 27.250 67.880 67.880 27.250-27.250c9.950-9.940 9.950-26.070 0-36.010z" fill="#5b9a3a"/></svg>
<div class="t" style="left:208.2px;top:470.75px;color:#2f3a5c">15</div>
<div class="t" style="left:289px;top:470.75px;width:100px;text-align:center;color:#333">28/04/2022</div>
<svg class="a" style="left:409px;top:472.75px" width="10.40" height="11.00" viewBox="0 0 448 512" preserveAspectRatio="none"><path d="M224 256c70.7 0 128-57.3 128-128S294.7 0 224 0 96 57.3 96 128s57.3 128 128 128zm89.6 32h-16.7c-22.2 10.2-46.9 16-72.9 16s-50.6-5.8-72.9-16h-16.7C60.2 288 0 348.2 0 422.4V464c0 26.5 21.5 48 48 48h352c26.5 0 48-21.5 48-48v-41.6c0-74.2-60.2-134.4-134.4-134.4z" fill="#74603c"/></svg>
<div class="t" style="left:424px;top:470.75px;color:#45456f">Ahmed</div>
<div class="t" style="left:692px;top:470.75px;width:100px;text-align:right;color:#3c7c7c">5 870,00</div>
<div class="badge br" style="left:858.6px;top:470.15px;width:55.4px">Brouillon</div>
<svg class="a" style="left:929.7px;top:472.15px" width="11.50" height="11.20" viewBox="0 0 512 512" preserveAspectRatio="none"><path d="M497.9 142.1l-46.1 46.1c-4.7 4.7-12.3 4.7-17 0l-111-111c-4.7-4.7-4.7-12.3 0-17l46.1-46.1c18.7-18.7 49.1-18.7 67.9 0l60.1 60.1c18.8 18.7 18.8 49.1 0 67.9zM284.2 99.8L21.6 362.4.4 483.9c-2.9 16.4 11.4 30.6 27.8 27.8l121.5-21.3 262.6-262.6c4.7-4.7 4.7-12.3 0-17l-111-111c-4.8-4.7-12.4-4.7-17.1 0zM124.1 339.9c-5.5-5.5-5.5-14.3 0-19.8l154-154c5.5-5.5 14.3-5.5 19.8 0s5.5 14.3 0 19.8l-154 154c-5.5 5.5-14.3 5.5-19.8 0zM88 424h48v36.3l-64.5 11.3-31.1-31.1L51.7 376H88v48z" fill="#333"/></svg>
<svg class="a" style="left:951px;top:471.95px" width="10.50" height="11.40" viewBox="0 0 448 512" preserveAspectRatio="none"><path d="M432 32H312l-9.4-18.7A24 24 0 0 0 281.1 0H166.8a23.72 23.72 0 0 0-21.4 13.3L136 32H16A16 16 0 0 0 0 48v32a16 16 0 0 0 16 16h416a16 16 0 0 0 16-16V48a16 16 0 0 0-16-16zM53.2 467a48 48 0 0 0 47.9 45h245.8a48 48 0 0 0 47.9-45L416 128H32z" fill="#626262"/></svg>
<div class="cb" style="left:970.3px;top:471.75px"></div>
<div class="t" style="left:193.5px;top:499.7px;color:#9a9a9a">Total</div>
<div class="t" style="left:692px;top:499.7px;width:100px;text-align:right;color:#9a9a9a">41 347,00</div>
<div class="a" style="left:0;top:635px;width:1000px;height:30.5px;background:#253c5b"></div>
<div class="t" style="left:0px;top:644px;width:1000px;text-align:center;font-size:13px;color:#fff">www.nextgestion.com</div>
</body></html>
